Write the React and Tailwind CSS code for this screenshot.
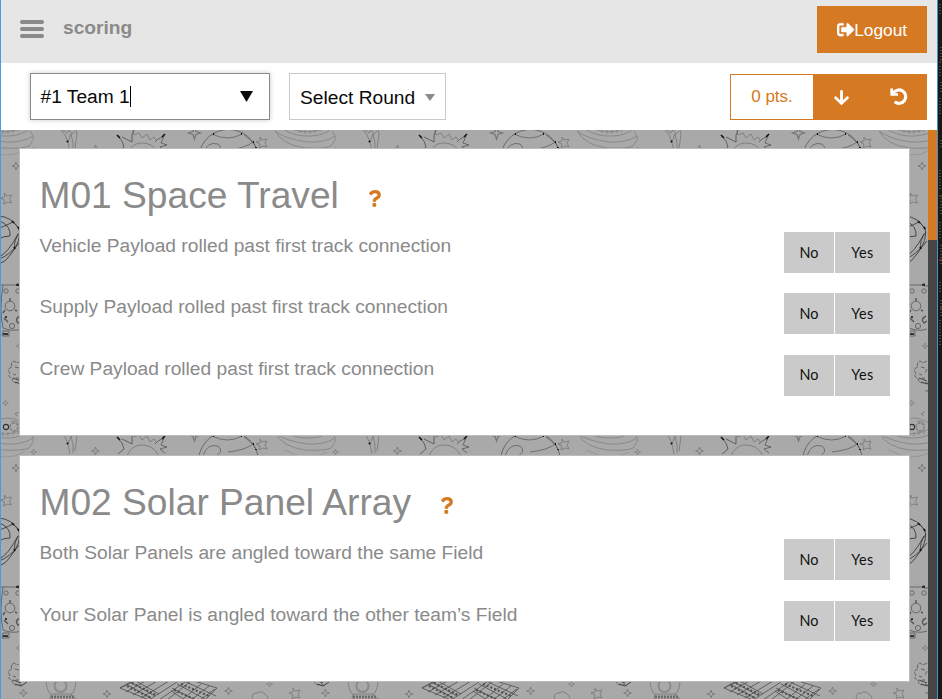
import { FaSignOutAlt } from "react-icons/fa";

const missions = [
  {
    title: "M01 Space Travel",
    card: "h-[288px] pt-[24px]",
    listClass: "mt-[15px]",
    rows: [
      "Vehicle Payload rolled past first track connection",
      "Supply Payload rolled past first track connection",
      "Crew Payload rolled past first track connection",
    ],
  },
  {
    title: "M02 Solar Panel Array",
    card: "h-[227px] pt-[24px]",
    listClass: "mt-[15.2px]",
    rows: [
      "Both Solar Panels are angled toward the same Field",
      "Your Solar Panel is angled toward the other team’s Field",
    ],
  },
];

function Sparkle({ x, y, s = 4 }) {
  return (
    <path
      transform={`translate(${x} ${y}) scale(${s / 4})`}
      d="M0-4 L1-1 L4 0 L1 1 L0 4 L-1 1 L-4 0 L-1-1Z"
    />
  );
}

function Star({ x, y }) {
  return (
    <path
      transform={`translate(${x} ${y})`}
      d="M-2-5 L0-2 L5-3 L3 1 L5 5 L1 4 L-3 6 L-2 2 L-6 0 L-2-1Z"
    />
  );
}

function Saucer() {
  return (
    <g opacity="0.8">
      <path d="M-28 1 Q-20 15 2 18 Q22 19 28 16 Q34 8 32 6 L29 1" />
      <path d="M-28 1 Q-18 9 4 12 Q22 13 32 6" />
      <path d="M-20 -1 Q-8 7 8 6 Q22 5 28 -1" />
      <path d="M-14-3 Q4 7 22-3 M-8-2 V1 M-3-1 V3 M2 0 V4 M7 0 V4 M12-1 V3 M17-2 V2" />
      <path d="M-18 18 Q4 31 24 20" opacity="0.6" />
      <path d="M-14 0 A22 20 0 0 1 28 0" />
    </g>
  );
}

function SpacePattern() {
  return (
    <svg className="absolute inset-0 h-full w-full" aria-hidden="true">
      <defs>
        <pattern id="space" width="302" height="302" patternUnits="userSpaceOnUse">
          <rect width="302" height="302" fill="#a9a9a9" />
          <g fill="none" stroke="#757575" strokeWidth="0.8">
            <Saucer />
            <g transform="translate(302 0)"><Saucer /></g>
            <g transform="translate(0 302)"><Saucer /></g>
            <g transform="translate(302 302)"><Saucer /></g>

            {/* comet tail */}
            <path d="M60 0 L64 5 L67 12 L70 4 L72 13 L72 21 M75 0 L76 4 L74 19 M67 12 L69 22 M62 0 L66 3 L68 0 L71 4 L74 1" />
            <circle cx="66.500" cy="11.500" r="0.700" fill="#111" stroke="#111" />
            <Sparkle x="94.500" y="19" />

            {/* sun */}
            <path d="M126 24 Q130 14 139 13 Q152 12 158 24" />
            <path d="M132 0 L133 5 L138 3 L141 8 L146 4 L149 10 L153 7 L155 10" />
            <path d="M116 5 L121 11 L123 17 L117 22 M121 7 L131 12 L131 5 L133 0" stroke="#4a4a4a" />
            <path d="M163 6 L157 9 L154 12 M163 6 L160 13 L166 15 L159 17 L164 21" stroke="#555" />
            <path d="M116 5 l3 3 M161 7 l3-3" stroke="#111" strokeWidth="1.600" />

            <Sparkle x="193.500" y="3" s="6" />
            <g stroke="#555">
              <path d="M198 24 A30 30 0 0 1 257 24" />
              <path d="M211 4 Q227 12 241 4 M243 5 Q254 13 254 16 M202 24 Q206 11 217 14 Q224 20 213 25 M227 20 Q245 18 252 12" strokeWidth="0.700" />
              <path d="M212 4 h1 M240 4 h1 M252 12 h1 M255 17 v1" stroke="#111" strokeWidth="1.800" />
            </g>
            <Star x="261" y="12" />
            <Sparkle x="32.500" y="20" s="3" />

            {/* left column doodles */}
            <Sparkle x="15" y="36" />
            <Star x="5.500" y="68" />
            <g stroke="#3a3a3a">
              <path d="M-2 86 Q11 87 18 99 M-1 91 Q10 96 9 106 Q2 106-2 109 M12 92 Q2 97-2 98 M12 92 L18 98 Q21 110 10 124 Q5 132-2 134 M19 102 Q12 111 14 118 M17 104 Q7 123-2 127 M20 111 Q8 126-2 129" strokeWidth="0.900" />
              <path d="M11 91 l2 2 M17 97 l1 2 M13 117 l1 2" stroke="#111" strokeWidth="1.700" />
            </g>
            <g stroke="#555">
              <path d="M0 155 H15 L17 153 V156 H21 M2 155 Q-2 180 2 198 M2 198 Q12 202 20 199 M2 201 H8 V206 H1Z" />
              <circle cx="5" cy="161" r="2.200" />
              <circle cx="17" cy="161" r="2.200" />
              <circle cx="9" cy="176" r="4.800" />
              <circle cx="11" cy="196" r="2.600" />
              <path d="M9 168 v3 M4 180 l-2 3 M14 180 l2 1 M19 186 Q13 189 17 193 L20 191 M3 188 l4 4" strokeWidth="1.400" />
              <path d="M2 204 h5 M4 187 h2 M15 155 h3" stroke="#111" strokeWidth="1.700" />
            </g>
            <Sparkle x="18" y="216" s="3" />
            <g stroke="#505050">
              <path d="M20 231 Q16 234 13 231 Q9 233 11 237 Q5 239 9 243 Q6 247 11 248 Q12 255 18 252 L22 254 M14 237 l4 1 M12 244 l3 1 M20 239 l-2 4 M15 248 h3" strokeDasharray="4 1" />
            </g>
            <Sparkle x="4.500" y="273" s="3" />
            <path d="M17 286 l-3-2 l4-2" />
            <circle cx="5" cy="297" r="2.600" stroke="#333" strokeWidth="1.100" />
            <circle cx="13" cy="297" r="4" strokeDasharray="3 1" stroke="#555" />
            <path d="M10 292 Q15 289 18 295" />

            {/* rocket and panels */}
            <Sparkle x="22.500" y="261" />
            <circle cx="59.500" cy="254" r="6" strokeWidth="2" stroke="#8b8b8b" />
            <path d="M45 248 Q45 257 50 263 L48 270 M75 248 Q75 258 70 263 L79 270 M50 262 H71" />
            <path d="M50 265 H73" stroke="#6b6b6b" strokeDasharray="2 1" strokeWidth="3" />
            <path d="M14 252 L20 254 L26 250 M12 248 L20 251" stroke="#444" strokeWidth="1" />
            <Sparkle x="106" y="262" />
            <g stroke="#4c4c4c" strokeWidth="0.800">
              <path d="M133 248 L119 256 L148 268 M133 248 L158 262 M129 250 L154 264 M125 252 L150 266 M119 256 L136 248 M125 260 L146 248 M132 263 L158 248 M140 266 L168 249 M148 268 L176 250 M158 268 L184 250 M166 268 L190 249 M181 248 L215 264 M190 248 L216 256 L204 268 M176 252 L204 267 M171 256 L194 268 M200 252 L181 268 M208 254 L190 268 M170 259 L184 268 M214 257 L199 268" />
              <path d="M131 251 L155 263 M126 254 L150 266 M180 252 L208 264 M173 258 L195 268" strokeWidth="2" strokeDasharray="2 2" />
            </g>
            <Sparkle x="227.500" y="259" />
            <Sparkle x="268.500" y="252" s="3" />
            <path d="M252 268 Q249 261 256 261 Q261 258 265 263 Q269 267 265 270" />
            <Star x="294" y="261" />
          </g>
        </pattern>
      </defs>
      <rect width="100%" height="100%" fill="url(#space)" />
    </svg>
  );
}

function DownIcon() {
  return (
    <svg className="h-[17px] w-[17px]" viewBox="0 0 17 17" fill="none" stroke="currentColor" strokeWidth="2.800" strokeLinecap="round">
      <path d="M8.500 2.300V13.500M2.600 8.700L8.500 14.400L14.400 8.700" />
    </svg>
  );
}

function UndoIcon() {
  return (
    <svg className="ml-px h-[18px] w-[18px]" viewBox="0 0 18 18" fill="none" stroke="currentColor">
      <path d="M1.700 0.500V6.500H8" strokeWidth="2.700" />
      <path d="M3 5.600A6.700 6.700 0 1 1 4.700 13.800" strokeWidth="3.100" />
    </svg>
  );
}

function HelpIcon() {
  return (
    <svg className="ml-[30px] mt-[7px] h-[17px] w-3 text-[#d57923]" viewBox="0 0 12 17" fill="none" stroke="currentColor">
      <path d="M1.200 4.500Q3 1.700 5.800 1.700Q10.200 1.700 10.200 5Q10.200 7 7.500 8.300Q5.300 9.400 5.300 11.800" strokeWidth="3.300" />
      <circle cx="5.300" cy="14.900" r="2.100" fill="currentColor" stroke="none" />
    </svg>
  );
}

function Mission({ title, rows, card, listClass }) {
  return (
    <section className={`${card} w-[891px] shrink-0 border border-[#bcbcbc] bg-white`}>
      <h2 className="ml-[19.5px] flex h-[44px] items-center whitespace-nowrap text-[37.15px] leading-[44px] text-[#8a8a8a]">
        {title}
        <HelpIcon />
      </h2>
      <div className={`flex flex-col pl-[19.5px] pr-[19px] ${listClass}`}>
        {rows.map((row) => (
          <div key={row} className="flex h-[61.4px] shrink-0 items-start justify-between">
            <span className="mt-px text-[19.2px] leading-[26px] text-[#8a8a8a]">{row}</span>
            <div className="flex h-[40.8px] gap-px font-['Lato',sans-serif] text-[14.4px] text-[#111]">
              <button className="w-[50px] bg-[#cacaca]">No</button>
              <button className="w-[55px] bg-[#cacaca] tracking-[0.4px]">Yes</button>
            </div>
          </div>
        ))}
      </div>
    </section>
  );
}

export default function App() {
  return (
    <div className="flex h-[699px] w-[942px] overflow-hidden border-l border-[#4a9be0] bg-white font-['Liberation_Sans',Arial,sans-serif]">
      <main className="flex w-[936px] shrink-0 flex-col">
        <header className="flex h-[63px] shrink-0 items-start justify-between bg-[#e6e6e6] pl-[19px] pr-[10px]">
          <div className="flex">
            <div className="mt-5 flex w-6 flex-col gap-[3px]">
              <i className="h-1 rounded-full bg-[#8a8a8a]" />
              <i className="h-1 rounded-full bg-[#8a8a8a]" />
              <i className="h-1 rounded-full bg-[#8a8a8a]" />
            </div>
            <h1 className="ml-[19px] mt-4 text-[19.2px] font-bold leading-6 text-[#8a8a8a]">scoring</h1>
          </div>
          <button className="mt-1.5 flex h-[47px] w-[110px] items-center justify-center bg-[#d57923] pt-0.5 text-[17.28px] text-white">
            <FaSignOutAlt className="-mt-0.5 h-[17.3px] w-[17.3px]" stroke="currentColor" strokeWidth="12" />
            Logout
          </button>
        </header>
        <div className="flex h-[67px] shrink-0 items-start pl-[29px] pr-[10px] pt-[10px]">
          <div className="flex h-[47px] w-[240px] items-center border border-[#8a8a8a] pl-[9.5px] pr-[16px] text-[19.2px] text-[#0a0a0a] shadow-[0_0_5px_#cacaca]">
            <span className="mt-0.5">#1 Team 1</span>
            <i className="h-[21px] w-px bg-black" />
            <svg className="ml-auto h-[11px] w-[13px]" viewBox="0 0 13 11"><path d="M0 0h13L6.500 11z" fill="#0a0a0a" /></svg>
          </div>
          <div className="ml-[19px] flex h-[47px] w-[157px] items-center border border-[#cacaca] pl-[10px] pr-[10px] text-[19.2px] text-[#0a0a0a]">
            <span className="mt-[3px] whitespace-nowrap">Select Round</span>
            <svg className="ml-auto mt-px h-[7px] w-[10px]" viewBox="0 0 10 7"><path d="M0 0h10L5 7z" fill="#8a8a8a" /></svg>
          </div>
          <div className="ml-auto mt-px flex h-[46px] w-[197px] border border-[#d57923] bg-[#d57923] text-[17px]">
            <div className="flex w-[82px] items-center justify-center bg-white text-[#d57923]">0 pts.</div>
            <button className="flex w-[57px] items-center justify-center text-white"><DownIcon /></button>
            <button className="flex w-[56px] items-center justify-center text-white"><UndoIcon /></button>
          </div>
        </div>
        <div className="relative flex min-h-0 flex-1">
          <div className="relative w-[927px] overflow-hidden">
            <SpacePattern />
            <div className="relative flex flex-col gap-[19px] pl-[18px] pt-[18px]">
              {missions.map((mission) => <Mission key={mission.title} {...mission} />)}
            </div>
          </div>
          <div className="w-[9px] bg-[#464646]"><div className="h-[110px] bg-[#d57923]" /></div>
        </div>
      </main>
      <aside className="w-[5px] shrink-0 overflow-hidden border-l border-[#4a8fc7] bg-[#191817]">
        <svg className="h-[350px] w-1" viewBox="0 0 4 350">
          <path d="M2 4V15M3 47V60M2 66V76M3 82V92M2 98V116M3 140V147M2 170V190M3 198V214M2 222V240M3 245V265M2 282V292M3 300V318M2 320V347" stroke="#747474" strokeDasharray="1 2" />
          <path d="M1 62h2M1 196h3M1 260h3M2 308h2" stroke="#8a4b32" />
        </svg>
      </aside>
    </div>
  );
}
